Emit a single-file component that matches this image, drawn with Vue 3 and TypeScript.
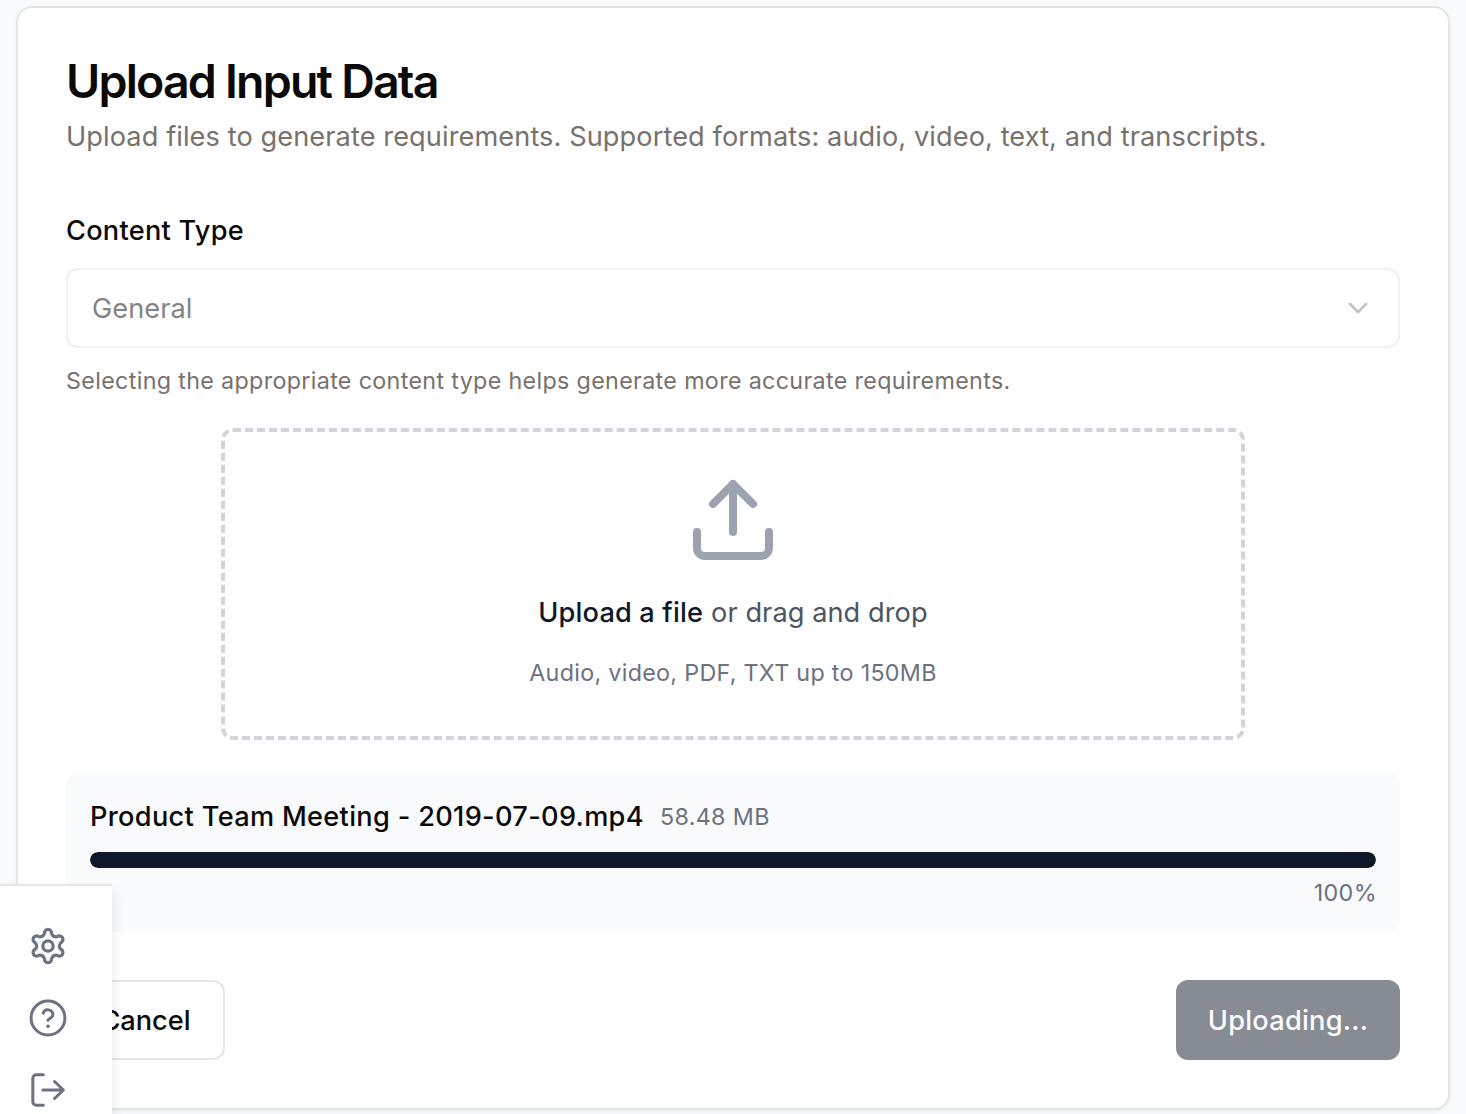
<script setup lang="ts">
const fileName = 'Product Team Meeting - 2019-07-09.mp4'
const fileSize = '58.48 MB'
const progress = 100
const gearLobe = 'M-3.4-5.89C-2.75-6.27-2.2-6.9-2.12-7.9A2.12 2.12 0 0 1 2.12-7.9C2.2-6.9 2.75-6.27 3.4-5.89'
</script>

<template>
  <main class="page">
    <section class="card">
      <header class="head">
        <h1 class="title">Upload Input Data</h1>
        <p class="desc">Upload files to generate requirements. Supported formats: audio, video, text, and transcripts.</p>
      </header>
      <div class="field">
        <label class="label">Content Type</label>
        <div class="select">
          <span class="value">General</span>
          <svg class="chevron" viewBox="0 0 24 24"><path d="m6 9 6 6 6-6" /></svg>
        </div>
        <p class="hint">Selecting the appropriate content type helps generate more accurate requirements.</p>
      </div>
      <div class="drop">
        <svg class="upload-icon" viewBox="0 0 24 24">
          <path d="M21 15v4a2 2 0 0 1-2 2H5a2 2 0 0 1-2-2v-4" />
          <path d="m17 8-5-5-5 5M12 3v12" />
        </svg>
        <p class="drop-text"><span class="link">Upload a file</span><span class="or">or drag and drop</span></p>
        <p class="formats">Audio, video, PDF, TXT up to 150MB</p>
      </div>
      <div class="file">
        <div class="file-row">
          <span class="name">{{ fileName }}</span>
          <span class="size">{{ fileSize }}</span>
        </div>
        <div class="track"><div class="bar" :style="{ width: progress + '%' }"></div></div>
        <p class="percent">{{ progress }}%</p>
      </div>
      <footer class="actions">
        <button class="btn cancel">Cancel</button>
        <button class="btn submit" disabled>Uploading...</button>
      </footer>
    </section>
    <aside class="dock">
      <svg class="gear" viewBox="-12 -12 24 24">
        <path v-for="n in 6" :key="n" :d="gearLobe" :transform="`rotate(${n * 60})`" />
        <circle r="3.1" />
      </svg>
      <svg viewBox="0 0 24 24"><circle cx="12" cy="12" r="10.15" /><path d="M9.09 9.1a3 3 0 0 1 5.83.9c0 2-3 2.6-3 3.4" /><path class="dot" d="M12 17h.01" /></svg>
      <svg viewBox="0 0 24 24"><path d="M9.2 21.1H5A2.1 2.1 0 0 1 2.9 19V4.9A2.1 2.1 0 0 1 5 2.8h4.2M15.9 6.9l5.3 5.1-5.3 5.1M21.2 12H8.9" /></svg>
    </aside>
  </main>
</template>

<style>
body { margin: 0; background: #f9fafb; }
</style>

<style scoped>
* { box-sizing: border-box; margin: 0; }
.page { position: relative; height: 1114px; padding: 6px 16px 0; overflow: hidden; background: #f9fafb; font-family: Inter, "Liberation Sans", sans-serif; color: #0c0a09; white-space: nowrap; }
.card { height: 1104px; display: flex; flex-direction: column; padding: 48px; border: 2px solid #e5e5e5; border-radius: 16px; background: #fff; box-shadow: 0 2px 4px rgba(0, 0, 0, .05); }
.title { font-size: 46.5px; line-height: 50px; font-weight: 600; letter-spacing: -1.8px; }
.desc { margin-top: 11px; font-size: 27.2px; line-height: 40px; letter-spacing: .08px; color: #78716c; }
.label { display: block; margin-top: 54px; font-size: 27.2px; line-height: 40px; font-weight: 500; letter-spacing: .25px; }
.select { display: flex; align-items: center; justify-content: space-between; height: 80px; margin-top: 17px; padding: 0 24px; border: 2px solid #f1f1f1; border-radius: 12px; }
.value { font-size: 27.2px; letter-spacing: .05px; color: #858484; }
.chevron { width: 32px; height: 32px; fill: none; stroke: #c2c2c2; stroke-width: 2; stroke-linecap: round; stroke-linejoin: round; }
.hint { margin-top: 17px; font-size: 23.3px; line-height: 32px; letter-spacing: .33px; color: #78716c; }
.drop { display: flex; flex-direction: column; align-items: center; align-self: center; width: 1024px; height: 312px; margin-top: 31px; padding-top: 40px; border: 4px dashed #d1d5db; border-radius: 12px; }
.upload-icon { width: 96px; height: 96px; fill: none; stroke: #9ca3af; stroke-width: 2; stroke-linecap: round; stroke-linejoin: round; }
.drop-text { display: flex; gap: 8px; margin-top: 25px; font-size: 27.2px; line-height: 40px; letter-spacing: .06px; color: #4b5563; }
.link { color: #0f172a; font-weight: 500; letter-spacing: .15px; }
.formats { margin-top: 24px; font-size: 23.3px; line-height: 32px; letter-spacing: .3px; color: #6b7280; }
.file { height: 160px; margin-top: 32px; padding: 24px; border-radius: 12px; background: #f9fafb; }
.file-row { display: flex; align-items: center; gap: 16px; height: 40px; }
.name { font-size: 27.2px; font-weight: 500; letter-spacing: .31px; }
.size { font-size: 23.3px; letter-spacing: .35px; color: #6b7280; }
.track { height: 16px; margin-top: 16px; border-radius: 8px; background: #e5e7eb; overflow: hidden; }
.bar { height: 16px; border-radius: 8px; background: #0f172a; }
.percent { margin-top: 8px; margin-right: -1px; font-size: 23.3px; line-height: 34px; letter-spacing: .4px; color: #6b7280; text-align: right; }
.actions { display: flex; justify-content: space-between; margin-top: 48px; }
.btn { height: 80px; padding: 0; border: 0; border-radius: 12px; font: 500 27.2px Inter, sans-serif; color: #0c0a09; }
.cancel { width: 159px; border: 2px solid #e5e5e5; background: #fff; }
.submit { width: 224px; background: #878b93; color: #fcfcfc; letter-spacing: .25px; }
.dock { position: absolute; left: 0; top: 884px; width: 112px; height: 240px; display: flex; flex-direction: column; gap: 32px; padding: 40px 28px; border-top: 2px solid #e5e7eb; background: #fff; box-shadow: 0 8px 12px rgba(0, 0, 0, .1); }
.dock svg { flex: none; width: 40px; height: 40px; fill: none; stroke: #6b7280; stroke-width: 1.8; stroke-linecap: round; stroke-linejoin: round; }
.dock .gear { stroke-width: 1.95; }
.dock .dot { stroke-width: 2.2; }
</style>
